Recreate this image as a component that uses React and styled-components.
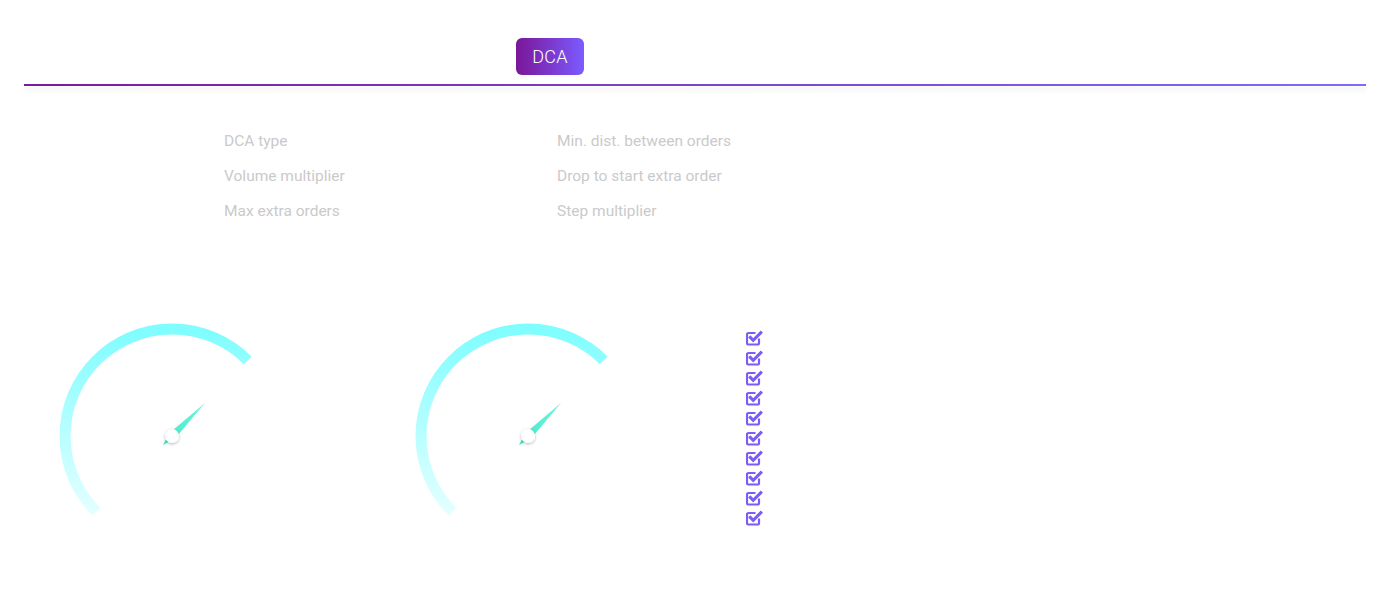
import React from "react";
import styled, { createGlobalStyle } from "styled-components";

const GlobalStyle = createGlobalStyle`
  body {
    margin: 0;
    background: #fff;
    font-family: "Roboto", "Liberation Sans", sans-serif;
  }
`;

const Page = styled.div`
  width: 1400px;
  height: 600px;
  overflow: hidden;
`;

const Header = styled.div`
  margin: 0 34px 0 24px;
  height: 84px;
  display: flex;
  align-items: flex-start;
  padding-top: 38px;
  box-sizing: border-box;
`;

const TabSpacer = styled.div`
  width: 492px;
`;

const TabButton = styled.button`
  width: 68px;
  height: 37px;
  border: none;
  border-radius: 6px;
  background: linear-gradient(90deg, #7a1699 0%, #7c5bff 100%);
  color: #fff;
  font-family: "Roboto", "Liberation Sans", sans-serif;
  font-weight: 300;
  font-size: 18px;
  letter-spacing: 0.3px;
  padding: 0;
  cursor: pointer;
`;

const Divider = styled.div`
  margin: 0 34px 0 24px;
  height: 2px;
  background: linear-gradient(90deg, #7b1a9a 0%, #7b6cfb 100%);
  box-shadow: 0 4px 5px rgba(0, 0, 0, 0.09);
`;

const Settings = styled.div`
  display: grid;
  grid-template-columns: 333px 333px;
  row-gap: 15px;
  padding: 45px 0 0 224px;
`;

const Label = styled.div`
  color: #cacaca;
  font-size: 15.5px;
  line-height: 20px;
`;

const Lower = styled.div`
  display: flex;
  align-items: flex-start;
  padding: 95px 0 0 52px;
`;

const GaugeBox = styled.div`
  width: 240px;
  height: 240px;
  margin-right: ${(p) => p.$gap}px;
`;

const CheckList = styled.div`
  display: flex;
  flex-direction: column;
  gap: 4px;
  padding-top: 14px;
`;

const CheckItem = styled.div`
  width: 17px;
  height: 16px;
  display: flex;
`;

const Gauge = ({ id }) => {
  const c = 120;
  const r = 107;
  const d = r * Math.SQRT1_2;
  return (
    <svg width="240" height="240" viewBox="0 0 240 240">
      <defs>
        <linearGradient id={`arc-${id}`} x1="0" y1="0" x2="0" y2="1">
          <stop offset="0" stopColor="#7ffdff" />
          <stop offset="1" stopColor="#e3ffff" />
        </linearGradient>
        <linearGradient id={`ndl-${id}`} x1="0" y1="0" x2="1" y2="0">
          <stop offset="0" stopColor="#45e8c8" />
          <stop offset="1" stopColor="#6ef6dc" />
        </linearGradient>
        <filter id={`sh-${id}`} x="-1" y="-1" width="3" height="3">
          <feDropShadow dx="0" dy="1" stdDeviation="1.5" floodColor="#000" floodOpacity="0.3" />
        </filter>
      </defs>
      <path
        d={`M ${c - d} ${c + d} A ${r} ${r} 0 0 1 ${c + d} ${c - d}`}
        fill="none"
        stroke={`url(#arc-${id})`}
        strokeWidth="11"
      />
      <g transform={`translate(${c} ${c}) rotate(-45)`}>
        <polygon points="47,0 0,4 -13,0 0,-4" fill={`url(#ndl-${id})`} />
      </g>
      <circle cx={c} cy={c} r="7" fill="#fff" filter={`url(#sh-${id})`} />
    </svg>
  );
};

const CheckIcon = () => (
  <svg width="17" height="16" viewBox="0 0 17 16">
    <path
      d="M13 8.5V13a1.5 1.5 0 0 1-1.5 1.5H2.5A1.5 1.5 0 0 1 1 13V4.5A1.5 1.5 0 0 1 2.5 3h7"
      fill="none"
      stroke="#7b5cf6"
      strokeWidth="2.2"
    />
    <path
      d="M4.3 7.4 7.2 10.3 14.8 2.7"
      fill="none"
      stroke="#7b5cf6"
      strokeWidth="3"
      strokeLinecap="square"
    />
  </svg>
);

const labels = [
  "DCA type",
  "Min. dist. between orders",
  "Volume multiplier",
  "Drop to start extra order",
  "Max extra orders",
  "Step multiplier",
];

export default function App() {
  return (
    <Page>
      <GlobalStyle />
      <Header>
        <TabSpacer />
        <TabButton>DCA</TabButton>
      </Header>
      <Divider />
      <Settings>
        {labels.map((l) => (
          <Label key={l}>{l}</Label>
        ))}
      </Settings>
      <Lower>
        <GaugeBox $gap={116}>
          <Gauge id="a" />
        </GaugeBox>
        <GaugeBox $gap={98}>
          <Gauge id="b" />
        </GaugeBox>
        <CheckList>
          {Array.from({ length: 10 }).map((_, i) => (
            <CheckItem key={i}>
              <CheckIcon />
            </CheckItem>
          ))}
        </CheckList>
      </Lower>
    </Page>
  );
}
